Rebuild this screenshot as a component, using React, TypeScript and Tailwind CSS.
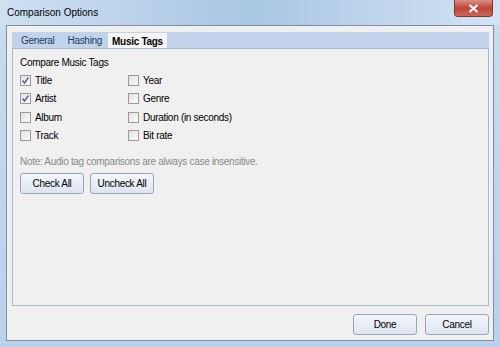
import React from 'react';

const tags = [
    { label: 'Title', checked: true },
    { label: 'Year', checked: false },
    { label: 'Artist', checked: true },
    { label: 'Genre', checked: false },
    { label: 'Album', checked: false },
    { label: 'Duration (in seconds)', checked: false },
    { label: 'Track', checked: false },
    { label: 'Bit rate', checked: false },
];

const CheckBox: React.FC<{ checked: boolean }> = ({ checked }) => (
    <div className="w-[11px] h-[11px] border border-[#9a9a9a] bg-gradient-to-br from-[#e2e2e2] to-[#fbfbfb] flex items-center justify-center shrink-0">
        {checked && (
            <svg width="9" height="9" viewBox="0 0 9 9">
                <path d="M1.5 4.5 L3.5 7 L7.5 1.5" fill="none" stroke="#4a6595" strokeWidth="1.4" />
            </svg>
        )}
    </div>
);

const Button: React.FC<{ label: string; width: string }> = ({ label, width }) => (
    <button
        className={`${width} h-[21px] rounded-[3px] border border-[#9aa6b8] bg-gradient-to-b from-[#f3f6fb] to-[#dde5f0] text-[10px] tracking-[-0.3px] text-black flex items-center justify-center`}
    >
        {label}
    </button>
);

const App: React.FC = () => {
    return (
        <div className="w-[500px] h-[347px] bg-gradient-to-b from-[#c9dcf0] to-[#b9d1ea] flex flex-col font-['Liberation_Sans',Arial,sans-serif] overflow-hidden">
            {/* Title bar */}
            <div className="h-[25px] flex items-start justify-between pl-[7px] pr-[7px] bg-gradient-to-r from-[#cfe0f2] via-[#a9c6e3] to-[#d3e3f3]">
                <span className="text-[10px] text-black mt-[5px]">Comparison Options</span>
                <div className="w-[39px] h-[17px] rounded-b-[4px] border border-t-0 border-[#7a3a34] bg-gradient-to-b from-[#d99085] via-[#bd4538] to-[#cf6655] flex items-center justify-center">
                    <svg width="11" height="9" viewBox="0 0 11 9">
                        <path d="M1.5 1 L9.5 8 M9.5 1 L1.5 8" stroke="#ffffff" strokeWidth="2.2" />
                    </svg>
                </div>
            </div>

            {/* Client area */}
            <div className="flex-1 mx-[6px] mb-[6px] border border-[#7f8ea3] bg-[#f0f0f0] flex flex-col pt-[6px] pl-[5px] pr-[3px] text-[10px] tracking-[-0.3px]">
                {/* Tab strip */}
                <div className="h-[16px] bg-[#c0d3ea] flex items-end pl-[2px] mr-[1px]">
                    <div className="px-[7px] h-[15px] flex items-center text-[#1e3a5f]">General</div>
                    <div className="px-[6px] h-[15px] flex items-center text-[#1e3a5f]">Hashing</div>
                    <div className="px-[4px] h-[16px] flex items-center font-bold text-black bg-[#f5f5f5] -mb-px">Music Tags</div>
                </div>

                {/* Panel */}
                <div className="h-[258px] mr-[1px] border border-[#a7bbd4] bg-[#f0f0f0] pl-[7px] pt-[6px]">
                    <div className="text-black mb-[5px]">Compare Music Tags</div>
                    <div className="grid grid-cols-[108px_1fr] gap-y-[7.3px]">
                        {tags.map((t) => (
                            <label key={t.label} className="flex items-center gap-[4px] text-black h-[11px]">
                                <CheckBox checked={t.checked} />
                                {t.label}
                            </label>
                        ))}
                    </div>
                    <div className="text-[#8a8a8a] mt-[13px]">
                        Note: Audio tag comparisons are always case insensitive.
                    </div>
                    <div className="flex gap-[6px] mt-[4px]">
                        <Button label="Check All" width="w-[64px]" />
                        <Button label="Uncheck All" width="w-[64px]" />
                    </div>
                </div>

                {/* Bottom buttons */}
                <div className="flex justify-end gap-[8px] mt-[8px] mr-[1px]">
                    <Button label="Done" width="w-[64px]" />
                    <Button label="Cancel" width="w-[64px]" />
                </div>
            </div>
        </div>
    );
};

export default App;
